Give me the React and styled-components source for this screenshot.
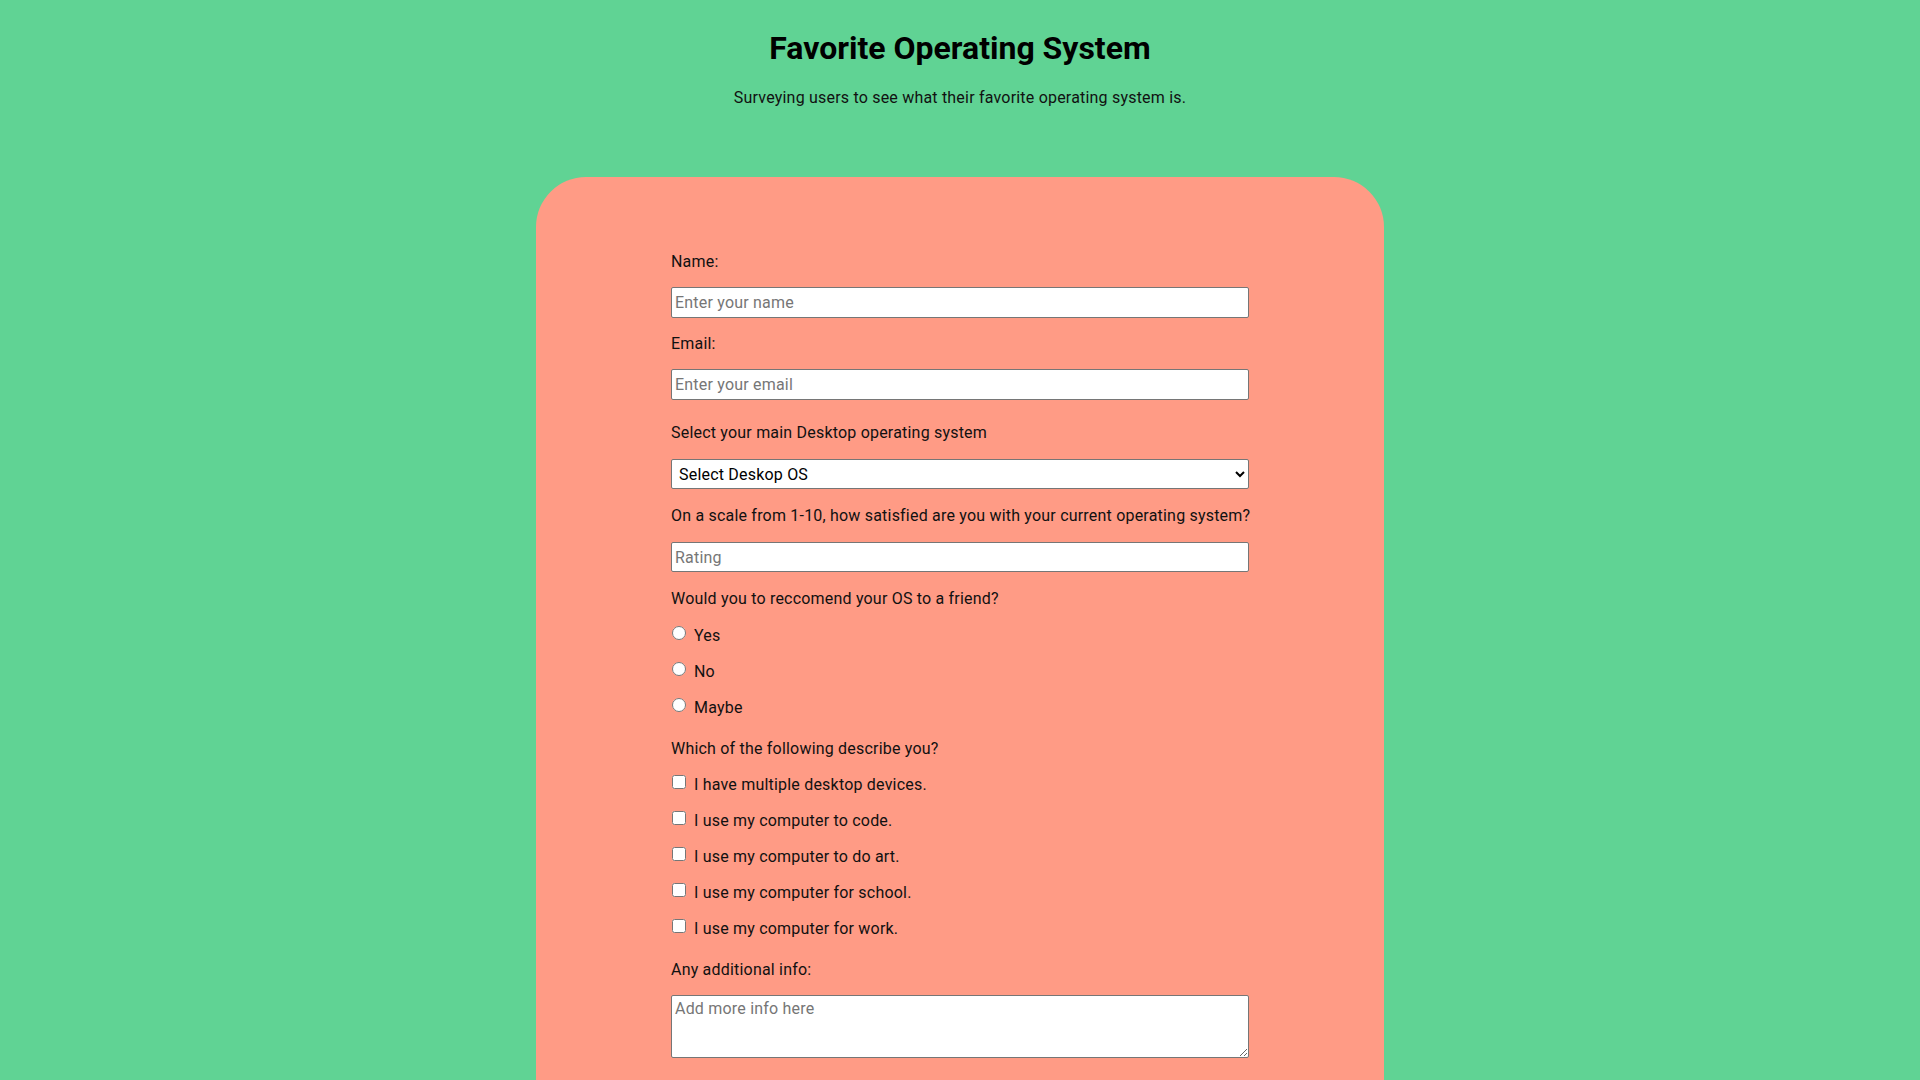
import styled, { createGlobalStyle } from 'styled-components'

const GlobalStyle = createGlobalStyle`
  html, body {
    margin: 0;
    padding: 0;
    background: #60d394;
  }
  body {
    font-family: Roboto, "Liberation Sans", sans-serif;
    color: #111;
  }
`

const Page = styled.div`
  min-height: 1080px;
  background: #60d394;
  overflow: hidden;
`

const Header = styled.header`
  text-align: center;
  padding-top: 26px;

  h1 {
    margin: 0;
    font-size: 32px;
    line-height: 44px;
    font-weight: 700;
    color: #000;
  }
  p {
    margin: 18px 0 0;
    font-size: 16px;
    letter-spacing: 0.2px;
    line-height: 20px;
  }
`

const Card = styled.main`
  width: 848px;
  margin: 69px auto 0;
  padding: 75px 0 80px;
  box-sizing: border-box;
  background: #ff9b85;
  border-radius: 50px;
`

const Form = styled.form`
  width: 578px;
  margin: 0 auto;
`

const Group = styled.div`
  margin-top: ${p => p.$gap ?? 16}px;
  &:first-child { margin-top: 0; }
`

const Label = styled.label`
  display: block;
  font-size: 16px;
  letter-spacing: 0.2px;
  line-height: 20px;
  white-space: nowrap;
  margin-bottom: ${p => p.$below ?? 15}px;
`

const field = `
  display: block;
  width: 100%;
  box-sizing: border-box;
  border: 1px solid #767676;
  border-radius: 2px;
  background: #fff;
  font-family: Roboto, "Liberation Sans", sans-serif;
  font-size: 16px;
  letter-spacing: 0.2px;
  padding: 0 3px;
  color: #000;
  &::placeholder { color: #767676; }
`

const TextInput = styled.input`
  ${field}
  height: ${p => p.$h || 31}px;
`

const Select = styled.select`
  ${field}
  height: 30px;
`

const TextArea = styled.textarea`
  ${field}
  height: 63px;
  padding: 3px 3px;
  resize: vertical;
`

const Choices = styled.div`
  display: flex;
  flex-direction: column;
  padding-top: ${p => p.$top ?? 8}px;
`

const Choice = styled.label`
  display: flex;
  align-items: center;
  height: 36px;
  font-size: 16px;
  letter-spacing: 0.2px;

  input {
    width: 14px;
    height: 14px;
    margin: -5px 8px 0 1px;
  }
`

const radios = ['Yes', 'No', 'Maybe']
const checks = [
  'I have multiple desktop devices.',
  'I use my computer to code.',
  'I use my computer to do art.',
  'I use my computer for school.',
  'I use my computer for work.',
]

export default function App() {
  return (
    <Page>
      <GlobalStyle />
      <Header>
        <h1>Favorite Operating System</h1>
        <p>Surveying users to see what their favorite operating system is.</p>
      </Header>
      <Card>
        <Form>
          <Group>
            <Label htmlFor="name">Name:</Label>
            <TextInput id="name" type="text" placeholder="Enter your name" />
          </Group>
          <Group>
            <Label htmlFor="email">Email:</Label>
            <TextInput id="email" type="email" placeholder="Enter your email" />
          </Group>
          <Group $gap={23}>
            <Label htmlFor="os" $below={16}>Select your main Desktop operating system</Label>
            <Select id="os" defaultValue="">
              <option value="">Select Deskop OS</option>
              <option>Windows</option>
              <option>macOS</option>
              <option>Linux</option>
            </Select>
          </Group>
          <Group $gap={17}>
            <Label htmlFor="rating" $below={16}>On a scale from 1-10, how satisfied are you with your current operating system?</Label>
            <TextInput id="rating" type="number" placeholder="Rating" $h={30} />
          </Group>
          <Group $gap={17}>
            <Label as="div" $below={0}>Would you to reccomend your OS to a friend?</Label>
            <Choices>
              {radios.map(r => (
                <Choice key={r}>
                  <input type="radio" name="recommend" value={r} />
                  {r}
                </Choice>
              ))}
            </Choices>
          </Group>
          <Group $gap={14}>
            <Label as="div" $below={0}>Which of the following describe you?</Label>
            <Choices $top={7}>
              {checks.map(c => (
                <Choice key={c}>
                  <input type="checkbox" value={c} />
                  {c}
                </Choice>
              ))}
            </Choices>
          </Group>
          <Group $gap={14}>
            <Label htmlFor="info">Any additional info:</Label>
            <TextArea id="info" placeholder="Add more info here" />
          </Group>
        </Form>
      </Card>
    </Page>
  )
}
